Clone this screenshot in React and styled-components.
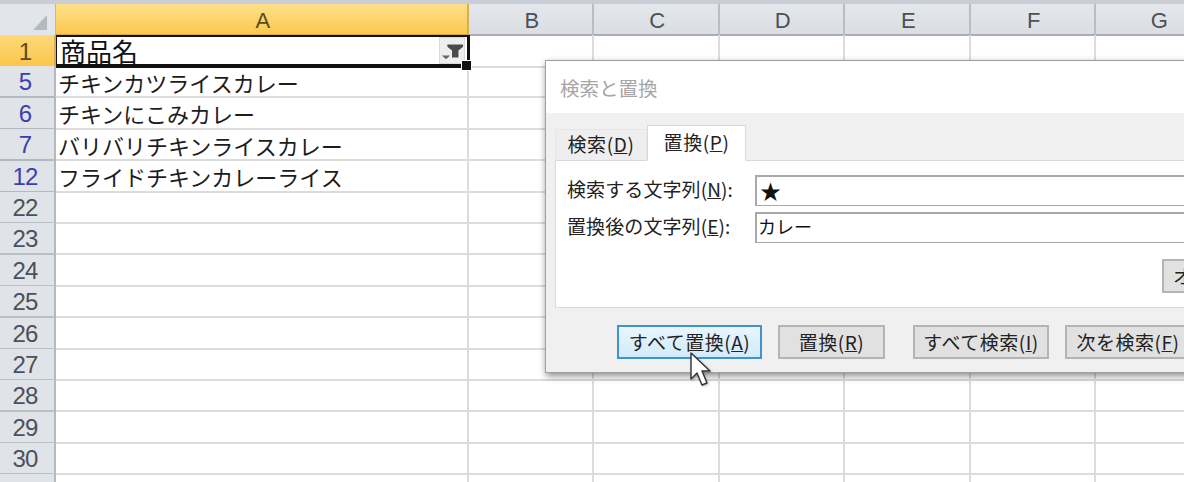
import styled, { createGlobalStyle } from "styled-components";

const GlobalStyle = createGlobalStyle`
    html, body {
        margin: 0;
        padding: 0;
        background: #fff;
        overflow: hidden;
    }
`;

const FONT = `"Noto Sans CJK JP", "Liberation Sans", sans-serif`;
const COLUMNS = "56px 412.5px 125.5px 125.5px 125.5px 125.5px 125.5px 125.5px";

const Page = styled.div`
    position: relative;
    width: 1184px;
    height: 482px;
    overflow: hidden;
    background: #fff;
    font-family: ${FONT};
`;

const TopStrip = styled.div`
    height: 4px;
    background: #c9ced6;
`;

const HeaderRow = styled.div`
    display: grid;
    grid-template-columns: ${COLUMNS};
    height: 31px;
`;

const Corner = styled.div`
    display: flex;
    align-items: flex-end;
    justify-content: flex-end;
    padding: 0 8px 5px 0;
    box-sizing: border-box;
    background: #e2e6ea;
    border-right: 1px solid #b4b8bf;
    border-bottom: 1px solid #aeb3ba;
`;

const ColHead = styled.div`
    display: flex;
    align-items: center;
    justify-content: center;
    box-sizing: border-box;
    padding: 4px 0 0 3px;
    font-family: "Liberation Sans", sans-serif;
    font-size: 22px;
    color: ${({ $active }) => ($active ? "#5c4a20" : "#4c5158")};
    background: ${({ $active }) => ($active ? "linear-gradient(#fde08a, #fcc94e)" : "linear-gradient(#e4e7eb, #dadee3)")};
    border-right: 2px solid ${({ $active }) => ($active ? "#d8ae52" : "#b9bdc4")};
    border-bottom: 2px solid ${({ $active }) => ($active ? "#d8a53c" : "#a9aeb6")};
`;

const Row = styled.div`
    display: grid;
    grid-template-columns: ${COLUMNS};
    height: 31.4px;
`;

const RowHead = styled.div`
    display: flex;
    align-items: center;
    justify-content: center;
    box-sizing: border-box;
    padding: 2px 4px 0 0;
    font-family: "Liberation Sans", sans-serif;
    font-size: 24px;
    letter-spacing: -0.8px;
    color: ${({ $active, $filtered }) => ($active ? "#5c4a20" : $filtered ? "#3a3fae" : "#4c5158")};
    background: ${({ $active }) => ($active ? "linear-gradient(#fdd979, #fbc64a)" : "#e0e3e8")};
    border-right: 2px solid ${({ $active }) => ($active ? "#d8ae52" : "#b4b8bf")};
    border-bottom: 2px solid ${({ $filtered }) => ($filtered ? "#b4b8c0" : "#bcc0c6")};
`;

const Cell = styled.div`
    display: flex;
    align-items: center;
    box-sizing: border-box;
    padding: 1px 0 0 2px;
    font-size: 22px;
    color: #1c1c1c;
    white-space: nowrap;
    overflow: hidden;
    border-right: 2px solid #dcdcdc;
    border-bottom: 2px solid #dcdcdc;
`;

const ActiveCell = styled.div`
    position: relative;
    display: flex;
    align-items: center;
    justify-content: space-between;
    box-sizing: border-box;
    height: 33px;
    margin-right: -1px;
    padding: 0 2px 0 3px;
    font-size: 26px;
    color: #111;
    border: 1px solid #111;
    border-width: 2px 3px 4px 1px;
    z-index: 1;
`;

const FilterButton = styled.div`
    display: flex;
    align-items: center;
    justify-content: center;
    width: 26px;
    height: 27px;
    background: #eeeeee;
    border: 1px solid #dadada;
    box-sizing: border-box;
`;

const FillHandle = styled.div`
    position: absolute;
    right: -5px;
    bottom: -7px;
    width: 9px;
    height: 9px;
    background: #111;
    border: 1px solid #fff;
`;

const Dialog = styled.div`
    position: absolute;
    left: 545px;
    top: 60px;
    width: 775px;
    height: 313px;
    display: flex;
    flex-direction: column;
    box-sizing: border-box;
    background: #f0f0f0;
    border: 1px solid #a0a0a0;
    box-shadow: 1px 3px 7px rgba(0, 0, 0, 0.45);
    font-size: 19px;
    color: #222;
`;

const TitleBar = styled.div`
    display: flex;
    align-items: center;
    height: 52px;
    padding-left: 14px;
    background: #fff;
    color: #a6a6a6;
    font-size: 19.5px;
`;

const Tabs = styled.div`
    display: flex;
    align-items: flex-end;
    height: 48px;
    padding-left: 9px;
    margin-bottom: -1px;
`;

const Tab = styled.div`
    position: relative;
    display: flex;
    align-items: center;
    justify-content: center;
    box-sizing: border-box;
    width: ${({ $width }) => $width}px;
    height: ${({ $active }) => ($active ? 36 : 32)}px;
    padding-bottom: 4px;
    letter-spacing: 0.6px;
    background: ${({ $active }) => ($active ? "#fff" : "#eeeeee")};
    border: 1px solid ${({ $active }) => ($active ? "#d9d9d9" : "#e6e6e6")};
    border-bottom: 1px solid ${({ $active }) => ($active ? "#fff" : "#d9d9d9")};
    z-index: ${({ $active }) => ($active ? 1 : 0)};
`;

const Panel = styled.div`
    display: flex;
    flex-direction: column;
    box-sizing: border-box;
    height: 148px;
    margin-left: 9px;
    padding: 14px 0 0 11px;
    background: #fff;
    border: 1px solid #d9d9d9;
`;

const FieldRow = styled.div`
    display: grid;
    grid-template-columns: 188px 540px;
    align-items: center;
    margin-bottom: 6px;
`;

const FieldLabel = styled.label`
    padding-bottom: 4px;
    white-space: nowrap;
    letter-spacing: 0.1px;
`;

const FieldBox = styled.div`
    display: flex;
    align-items: center;
    box-sizing: border-box;
    height: 31px;
    padding-left: ${({ $inset }) => $inset}px;
    padding-bottom: ${({ $lift }) => $lift}px;
    border: 1px solid #a9a9a9;
    border-top-width: 2px;
    border-left-width: 2px;
    font-size: ${({ $size }) => $size}px;
    color: #111;
`;

const OptionRow = styled.div`
    display: flex;
    padding: 10px 0 0 595px;
`;

const Footer = styled.div`
    display: flex;
    padding: 17px 0 0 71px;
`;

const DialogButton = styled.div`
    display: flex;
    align-items: center;
    justify-content: ${({ $clip }) => ($clip ? "flex-start" : "center")};
    box-sizing: border-box;
    flex: none;
    width: ${({ $width }) => $width}px;
    height: 34px;
    margin-left: ${({ $gap }) => $gap || 0}px;
    padding-left: ${({ $clip }) => ($clip ? 9 : 0)}px;
    padding-bottom: 2px;
    white-space: nowrap;
    letter-spacing: 0.5px;
    background: ${({ $focus }) => ($focus ? "linear-gradient(#e8f5fd, #d2ebfb)" : "#e1e1e1")};
    border: ${({ $focus }) => ($focus ? "2px solid #3f93cf" : "2px solid #b4b4b4")};
`;

const Cursor = styled.svg`
    position: absolute;
    left: 689px;
    top: 352px;
    filter: drop-shadow(1px 1px 1px rgba(0, 0, 0, 0.25));
`;

const DATA_ROWS = [
    { no: 5, name: "チキンカツライスカレー", filtered: true },
    { no: 6, name: "チキンにこみカレー", filtered: true },
    { no: 7, name: "バリバリチキンライスカレー", filtered: true },
    { no: 12, name: "フライドチキンカレーライス", filtered: true },
    { no: 22 },
    { no: 23 },
    { no: 24 },
    { no: 25 },
    { no: 26 },
    { no: 27 },
    { no: 28 },
    { no: 29 },
    { no: 30 },
];

const OTHER_COLUMNS = ["B", "C", "D", "E", "F", "G"];

const FunnelIcon = () => (
    <svg width="26" height="24" viewBox="0 0 26 24">
        <path d="M8 5h17v2.500l-5 4V19h-7v-7.500l-5-4z" fill="#4a4a4a" />
        <path d="M2 17h9l-4.500 4z" fill="#666" />
    </svg>
);

export default function App() {
    return (
        <Page>
            <GlobalStyle />
            <TopStrip />
            <HeaderRow>
                <Corner>
                    <svg width="14" height="15" viewBox="0 0 14 15">
                        <path d="M14 0v15H0z" fill="#b4b9bf" />
                    </svg>
                </Corner>
                <ColHead $active>A</ColHead>
                {OTHER_COLUMNS.map((col) => (
                    <ColHead key={col}>{col}</ColHead>
                ))}
            </HeaderRow>
            <Row>
                <RowHead $active>1</RowHead>
                <ActiveCell>
                    商品名
                    <FilterButton>
                        <FunnelIcon />
                    </FilterButton>
                    <FillHandle />
                </ActiveCell>
                {OTHER_COLUMNS.map((col) => (
                    <Cell key={col} />
                ))}
            </Row>
            {DATA_ROWS.map((row) => (
                <Row key={row.no}>
                    <RowHead $filtered={row.filtered}>{row.no}</RowHead>
                    <Cell>{row.name}</Cell>
                    {OTHER_COLUMNS.map((col) => (
                        <Cell key={col} />
                    ))}
                </Row>
            ))}
            <Row>
                <RowHead />
                <Cell />
                {OTHER_COLUMNS.map((col) => (
                    <Cell key={col} />
                ))}
            </Row>
            <Dialog>
                <TitleBar>検索と置換</TitleBar>
                <Tabs>
                    <Tab $width={92}>
                        <span>検索(<u>D</u>)</span>
                    </Tab>
                    <Tab $width={99} $active>
                        <span>置換(<u>P</u>)</span>
                    </Tab>
                </Tabs>
                <Panel>
                    <FieldRow>
                        <FieldLabel>検索する文字列(<u>N</u>):</FieldLabel>
                        <FieldBox $size={21} $inset={3} $lift={2}>★</FieldBox>
                    </FieldRow>
                    <FieldRow>
                        <FieldLabel>置換後の文字列(<u>E</u>):</FieldLabel>
                        <FieldBox $size={18} $inset={1} $lift={4}>カレー</FieldBox>
                    </FieldRow>
                    <OptionRow>
                        <DialogButton $width={140} $clip>オプション(<u>T</u>)</DialogButton>
                    </OptionRow>
                </Panel>
                <Footer>
                    <DialogButton $width={145} $focus>すべて置換(<u>A</u>)</DialogButton>
                    <DialogButton $width={107} $gap={16}>置換(<u>R</u>)</DialogButton>
                    <DialogButton $width={136} $gap={28}>すべて検索(<u>I</u>)</DialogButton>
                    <DialogButton $width={126} $gap={16}>次を検索(<u>F</u>)</DialogButton>
                </Footer>
            </Dialog>
            <Cursor width="24" height="36" viewBox="0 0 24 36">
                <path
                    d="M2 1v26l6-6 5 12 5-2-5-12h8z"
                    fill="#fff"
                    stroke="#333"
                    strokeWidth="1.4"
                    strokeLinejoin="round"
                />
            </Cursor>
        </Page>
    );
}
